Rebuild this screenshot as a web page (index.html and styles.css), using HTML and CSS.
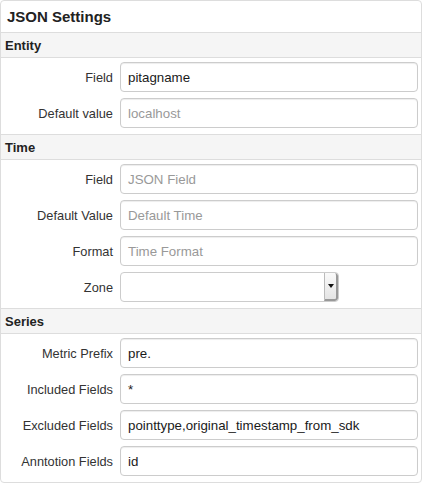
FILE: index.html
```html
<!DOCTYPE html>
<html>
<head>
<meta charset="utf-8">
<link rel="stylesheet" href="styles.css">
</head>
<body>
<div class="panel">
  <div class="title">JSON Settings</div>

  <div class="section">
    <div class="section-head">Entity</div>
    <div class="section-body">
      <div class="row"><label class="lbl">Field</label><div class="input">pitagname</div></div>
      <div class="row"><label class="lbl">Default value</label><div class="input ph">localhost</div></div>
    </div>
  </div>

  <div class="section">
    <div class="section-head">Time</div>
    <div class="section-body">
      <div class="row"><label class="lbl">Field</label><div class="input ph">JSON Field</div></div>
      <div class="row"><label class="lbl">Default Value</label><div class="input ph">Default Time</div></div>
      <div class="row"><label class="lbl">Format</label><div class="input ph">Time Format</div></div>
      <div class="row"><label class="lbl">Zone</label>
        <div class="select"><span class="sel-text"></span><span class="sel-btn"><span class="tri"></span></span></div>
      </div>
    </div>
  </div>

  <div class="section">
    <div class="section-head">Series</div>
    <div class="section-body">
      <div class="row"><label class="lbl">Metric Prefix</label><div class="input">pre.</div></div>
      <div class="row"><label class="lbl">Included Fields</label><div class="input">*</div></div>
      <div class="row"><label class="lbl">Excluded Fields</label><div class="input">pointtype,original_timestamp_from_sdk</div></div>
      <div class="row"><label class="lbl">Anntotion Fields</label><div class="input">id</div></div>
    </div>
  </div>
</div>
</body>
</html>
```

FILE: styles.css
```css
* { box-sizing: border-box; }
html, body { margin: 0; padding: 0; background: #fff; }
body {
  font-family: "Liberation Sans", Arial, sans-serif;
  color: #333;
  width: 424px;
  height: 484px;
  overflow: hidden;
}
.panel {
  width: 422px;
  border: 1px solid #ddd;
  border-radius: 4px;
  background: #fff;
}
.title {
  height: 31px;
  display: flex;
  align-items: center;
  padding-left: 6px;
  font-size: 15px;
  font-weight: bold;
  color: #222;
}
.section-head {
  height: 26px;
  border-top: 1px solid #ddd;
  border-bottom: 1px solid #ddd;
  background: #f5f5f5;
  display: flex;
  align-items: center;
  padding-left: 4px;
  font-size: 13px;
  font-weight: bold;
  color: #222;
}
.section-body {
  padding: 4px 3px 6px 0;
  display: flex;
  flex-direction: column;
  gap: 6px;
}
.row {
  display: grid;
  grid-template-columns: 112px 1fr;
  column-gap: 7px;
  align-items: center;
  height: 30px;
}
.lbl {
  text-align: right;
  font-size: 12.8px;
  color: #333;
}
.input {
  height: 30px;
  border: 1px solid #ccc;
  border-radius: 4px;
  box-shadow: inset 0 1px 1px rgba(0,0,0,0.075);
  padding: 0 7px;
  display: flex;
  align-items: center;
  font-size: 13.3px;
  color: #1a1a1a;
  white-space: nowrap;
  overflow: hidden;
}
.input.ph { color: #999; }
.select {
  width: 219px;
  height: 30px;
  border: 1px solid #ccc;
  border-radius: 4px;
  display: flex;
  overflow: hidden;
}
.sel-text { flex: 1; }
.sel-btn {
  width: 14px;
  background: linear-gradient(#fafafa, #e4e4e4);
  border-left: 1px solid #bbb;
  border-right: 2px solid #999;
  border-bottom: 2px solid #999;
  border-radius: 0 3px 3px 0;
  display: flex;
  align-items: center;
  justify-content: center;
}
.tri {
  width: 0;
  height: 0;
  border-left: 3px solid transparent;
  border-right: 3px solid transparent;
  border-top: 4px solid #111;
}
```
